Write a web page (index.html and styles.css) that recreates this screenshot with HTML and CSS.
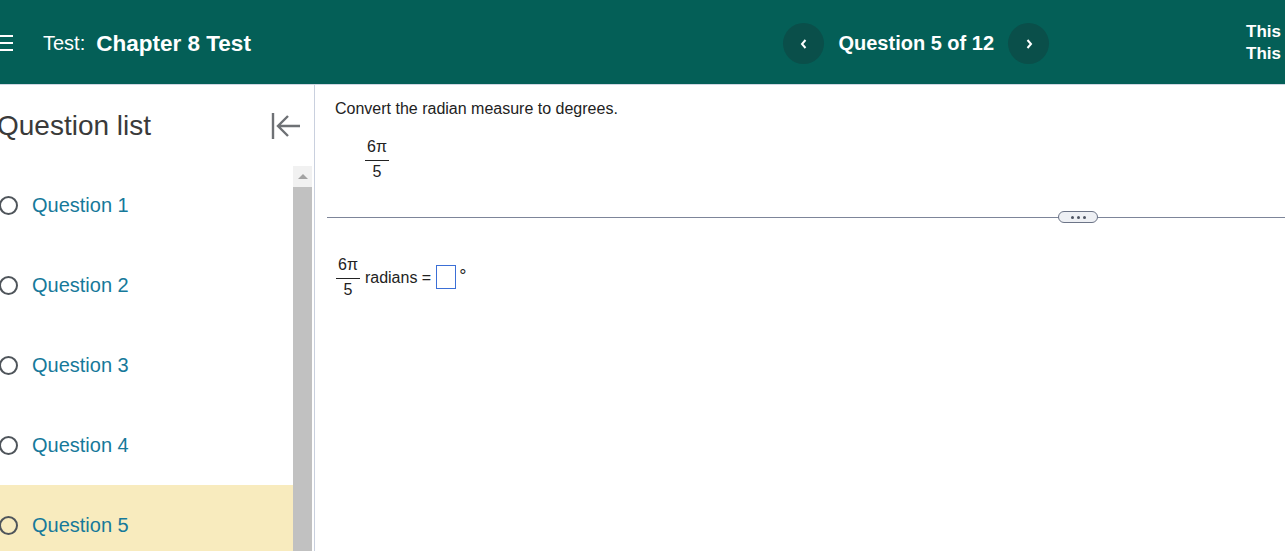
FILE: index.html
```html
<!DOCTYPE html>
<html lang="en">
<head>
  <meta charset="UTF-8" />
  <title>Test: Chapter 8 Test</title>
  <link rel="stylesheet" href="styles.css">
</head>
<body>
  <header class="topbar">
    <div class="brand">
      <svg class="menu-icon" width="16" height="18" viewBox="0 0 16 18">
        <rect x="0" y="1" width="16" height="2" fill="#fff"/>
        <rect x="0" y="8" width="16" height="2" fill="#fff"/>
        <rect x="0" y="15" width="16" height="2" fill="#fff"/>
      </svg>
      <span class="test-label">Test:</span>
      <span class="test-name">Chapter 8 Test</span>
    </div>

    <nav class="qnav">
      <button class="nav-btn" aria-label="Previous question">
        <svg width="10" height="12" viewBox="0 0 10 12"><path d="M6.5 2 L3 6 L6.5 10" fill="none" stroke="#fff" stroke-width="2"/></svg>
      </button>
      <span class="qnav-title">Question 5 of 12</span>
      <button class="nav-btn" aria-label="Next question">
        <svg width="10" height="12" viewBox="0 0 10 12"><path d="M3.5 2 L7 6 L3.5 10" fill="none" stroke="#fff" stroke-width="2"/></svg>
      </button>
    </nav>

    <div class="user">
      <div>This</div>
      <div>This</div>
    </div>
  </header>

  <div class="layout">
    <aside class="sidebar">
      <div class="side-head">
        <h2 class="side-title">Question list</h2>
        <button class="collapse" aria-label="Collapse question list">
          <svg width="30" height="28" viewBox="0 0 30 28">
            <path d="M2 1 V27" stroke="#6e7175" stroke-width="2.4" fill="none"/>
            <path d="M29 14 H8 M17 4 L7 14 L17 24" stroke="#6e7175" stroke-width="2.4" fill="none"/>
          </svg>
        </button>
      </div>

      <div class="side-body">
        <ul class="qlist">
          <li class="qitem"><span class="radio"></span><a href="#">Question 1</a></li>
          <li class="qitem"><span class="radio"></span><a href="#">Question 2</a></li>
          <li class="qitem"><span class="radio"></span><a href="#">Question 3</a></li>
          <li class="qitem"><span class="radio"></span><a href="#">Question 4</a></li>
          <li class="qitem current"><span class="radio"></span><a href="#">Question 5</a></li>
        </ul>
        <div class="scrollbar">
          <div class="scroll-up"></div>
          <div class="scroll-thumb"></div>
        </div>
      </div>
    </aside>

    <main class="content">
      <p class="prompt">Convert the radian measure to degrees.</p>
      <div class="given">
        <span class="frac">
          <span class="num">6π</span>
          <span class="den">5</span>
        </span>
      </div>

      <div class="splitter">
        <span class="grip"><i></i><i></i><i></i></span>
      </div>

      <div class="answer">
        <span class="frac">
          <span class="num">6π</span>
          <span class="den">5</span>
        </span>
        <span class="answer-text">radians =</span>
        <span class="answer-box"></span>
        <span class="degree">°</span>
      </div>
    </main>
  </div>
</body>
</html>
```

FILE: styles.css
```css
html, body {
  margin: 0;
  padding: 0;
  height: 100%;
  overflow: hidden;
  font-family: "Liberation Sans", Arial, sans-serif;
  background: #fff;
  color: #222;
}

.topbar {
  height: 85px;
  box-sizing: border-box;
  padding-top: 3px;
  background: #045f57;
  border-bottom: 1px solid #cfd6e2;
  display: flex;
  align-items: center;
  color: #fff;
}

.brand {
  flex: 1;
  display: flex;
  align-items: center;
  font-size: 22px;
}

.menu-icon {
  margin-left: -3px;
  margin-right: 30px;
  margin-top: -2px;
}

.test-label {
  font-size: 20px;
  margin-right: 11px;
}

.test-name {
  font-weight: bold;
  font-size: 22.5px;
}

.qnav {
  display: flex;
  align-items: center;
  gap: 14px;
}

.nav-btn {
  width: 41px;
  height: 41px;
  border-radius: 50%;
  border: none;
  background: #0a4f4a;
  display: flex;
  align-items: center;
  justify-content: center;
  padding: 0;
  cursor: pointer;
}

.qnav-title {
  font-size: 20px;
  font-weight: bold;
}

.user {
  margin-left: 197px;
  padding-right: 4px;
  font-size: 17px;
  font-weight: bold;
  line-height: 22px;
  margin-top: -2px;
}

.layout {
  display: flex;
  height: calc(100% - 85px);
}

.sidebar {
  width: 315px;
  flex-shrink: 0;
  border-right: 1px solid #c9d0de;
  box-sizing: border-box;
  display: flex;
  flex-direction: column;
}

.side-head {
  height: 81px;
  flex-shrink: 0;
  display: flex;
  align-items: center;
  justify-content: space-between;
  padding-right: 13px;
}

.side-title {
  margin: 0 0 0 -3px;
  font-size: 28px;
  font-weight: normal;
  color: #3a3a3a;
}

.collapse {
  border: none;
  background: none;
  padding: 0;
  display: flex;
  cursor: pointer;
}

.side-body {
  flex: 1;
  min-height: 0;
  overflow: hidden;
  display: flex;
}

.qlist {
  list-style: none;
  margin: 0;
  padding: 0;
  width: 293px;
}

.qitem {
  height: 80px;
  display: flex;
  align-items: center;
  gap: 14px;
  margin-top: -1px;
  margin-bottom: 1px;
}

.qitem .radio {
  width: 19px;
  height: 19px;
  box-sizing: border-box;
  border: 2.5px solid #4f555b;
  border-radius: 50%;
  margin-left: -1px;
}

.qitem a {
  font-size: 20px;
  color: #16799a;
  text-decoration: none;
}

.qitem.current {
  background: #f8ebbe;
}

.scrollbar {
  width: 19px;
  background: #f1f1f1;
  display: flex;
  flex-direction: column;
}

.scroll-up {
  height: 21px;
  display: flex;
  align-items: center;
  justify-content: center;
}

.scroll-up::before {
  content: "";
  border-left: 5px solid transparent;
  border-right: 5px solid transparent;
  border-bottom: 5px solid #a3a3a3;
}

.scroll-thumb {
  flex: 1;
  background: #c1c1c1;
}

.content {
  flex: 1;
  padding-top: 15px;
}

.prompt {
  margin: 0 0 0 20px;
  font-size: 16px;
  line-height: 18px;
}

.frac {
  display: inline-flex;
  flex-direction: column;
  align-items: center;
  font-size: 16px;
  line-height: 18px;
}

.frac .num {
  padding: 0 2px 4px;
  border-bottom: 1.5px solid #222;
}

.frac .den {
  padding-top: 2px;
}

.given {
  margin: 20px 0 0 50px;
}

.splitter {
  margin: 36px 0 0 12px;
  height: 1px;
  background: #7d8599;
  position: relative;
}

.grip {
  position: absolute;
  left: 731px;
  top: -6px;
  width: 40px;
  height: 12px;
  box-sizing: border-box;
  border: 1.5px solid #6c7487;
  border-radius: 7px;
  background: #eef0f4;
  display: flex;
  align-items: center;
  justify-content: center;
  gap: 3px;
}

.grip i {
  width: 3px;
  height: 3px;
  background: #4f5563;
  border-radius: 50%;
}

.answer {
  margin: 38px 0 0 21px;
  display: flex;
  align-items: center;
  font-size: 16px;
}

.answer-text {
  margin-left: 5px;
}

.answer-box {
  width: 20px;
  height: 24px;
  box-sizing: border-box;
  border: 1.5px solid #3b6fd6;
  margin-left: 5px;
  margin-top: -2px;
}

.degree {
  margin-left: 3px;
  align-self: flex-start;
  margin-top: 10px;
  font-size: 18px;
}
```
